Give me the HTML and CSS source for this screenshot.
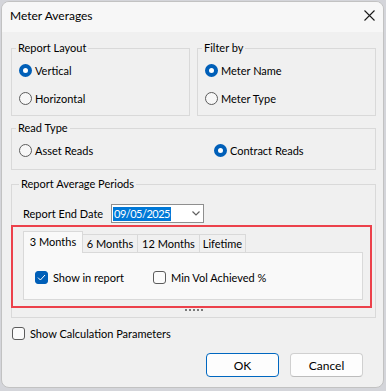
FILE: index.html
```html
<!DOCTYPE html>
<html lang="en">
<head>
  <meta charset="UTF-8" />
  <meta name="viewport" content="width=device-width, initial-scale=1" />
  <title>Meter Averages</title>
  <link rel="stylesheet" href="styles.css">
</head>
<body>
  <div class="window">
    <div class="titlebar">
      <span class="title">Meter Averages</span>
      <svg class="close" width="11" height="11" viewBox="0 0 11 11">
        <path d="M0.5 0.5 L10.5 10.5 M10.5 0.5 L0.5 10.5" stroke="#1a1a1a" stroke-width="1.1" fill="none" />
      </svg>
    </div>

    <div class="content">
      <div class="top-row">
        <fieldset class="group">
          <legend>Report Layout</legend>
          <div class="options">
            <div class="radio"><span class="radio-mark on"></span>Vertical</div>
            <div class="radio"><span class="radio-mark"></span>Horizontal</div>
          </div>
        </fieldset>
        <fieldset class="group">
          <legend>Filter by</legend>
          <div class="options">
            <div class="radio"><span class="radio-mark on"></span>Meter Name</div>
            <div class="radio"><span class="radio-mark"></span>Meter Type</div>
          </div>
        </fieldset>
      </div>

      <fieldset class="group read-type">
        <legend>Read Type</legend>
        <div class="options">
          <div class="radio"><span class="radio-mark"></span>Asset Reads</div>
          <div class="radio"><span class="radio-mark on"></span>Contract Reads</div>
        </div>
      </fieldset>

      <fieldset class="group periods">
        <legend>Report Average Periods</legend>
        <div class="date-row">
          <span class="date-label">Report End Date</span>
          <div class="datebox">
            <span class="sel">09/05/2025</span>
            <svg width="8" height="5" viewBox="0 0 8 5">
              <path d="M0.5 0.5 L4 4 L7.5 0.5" stroke="#606060" stroke-width="1.2" fill="none" />
            </svg>
          </div>
        </div>

        <div class="tabs">
          <div class="tab-strip">
            <div class="tab active" style="width: 60px">3 Months</div>
            <div class="tab" style="width: 56px">6 Months</div>
            <div class="tab" style="width: 63px">12 Months</div>
            <div class="tab" style="width: 47px">Lifetime</div>
          </div>
          <div class="panel">
            <div class="check">
              <span class="check-mark on">
                <svg width="11" height="11" viewBox="0 0 11 11">
                  <path d="M2 5.6 L4.4 8 L9 3" stroke="#fff" stroke-width="1" fill="none" />
                </svg>
              </span>
              Show in report
            </div>
            <div class="check"><span class="check-mark"></span>Min Vol Achieved %</div>
          </div>
        </div>

        <div class="grip"><i></i><i></i><i></i><i></i><i></i></div>
      </fieldset>

      <div class="check calc"><span class="check-mark"></span>Show Calculation Parameters</div>

      <div class="buttons">
        <button class="btn btn-default">OK</button>
        <button class="btn">Cancel</button>
      </div>
    </div>

    <div class="highlight"></div>
  </div>
</body>
</html>
```

FILE: styles.css
```css
body {
  margin: 0;
  background: #d4d5da;
  font-family: Lato, "Liberation Sans", sans-serif;
  font-size: 11px;
  color: #000;
}

.window {
  position: relative;
  box-sizing: border-box;
  width: 383px;
  height: 387px;
  margin: 1px 0 0 1px;
  border: 1px solid #c2c2c2;
  border-radius: 8px;
  background: #f0f0f0;
  overflow: hidden;
}

.titlebar {
  height: 30px;
  background: #f7f7f7;
  display: flex;
  justify-content: space-between;
  align-items: flex-start;
}
.title {
  margin: 6px 0 0 8px;
  font-size: 12px;
  line-height: 16px;
}
.close {
  margin: 8px 8px 0 0;
}

.content {
  padding: 8px 7px 0 9px;
}

.top-row {
  display: grid;
  grid-template-columns: 179px 179px;
  gap: 7px;
}

.group {
  margin: 0;
  padding: 0;
  min-width: 0;
  border: 1px solid #d9d9d9;
}
.group legend {
  padding: 0 2px;
  margin-left: 4px;
  line-height: 16px;
}
.group .options {
  display: flex;
  flex-direction: column;
  gap: 8px;
  padding: 4px 7px 7px;
}

.radio {
  display: flex;
  align-items: center;
  gap: 3px;
  height: 20px;
}
.radio-mark {
  box-sizing: border-box;
  width: 13px;
  height: 13px;
  border-radius: 50%;
  border: 1px solid #5c5c5c;
  background: #f7f7f7;
}
.radio-mark.on {
  border: 4px solid #005fb8;
  background: #fff;
}

.read-type {
  margin-top: 4px;
}
.read-type .options {
  display: grid;
  grid-template-columns: 187px auto;
  padding: 4px 7px 9px;
}

.periods {
  margin-top: 6px;
}
.periods legend {
  margin-left: 7px;
}

.date-row {
  display: flex;
  align-items: center;
  height: 19px;
  margin: 12px 0 0 11px;
}
.date-label {
  width: 88px;
}
.datebox {
  box-sizing: border-box;
  width: 93px;
  height: 19px;
  border: 1px solid #8f8f8f;
  background: #fff;
  display: flex;
  align-items: center;
  justify-content: space-between;
  padding: 0 3px 0 1px;
}
.sel {
  background: #0078d7;
  color: #fff;
  line-height: 14px;
  padding: 0 1px;
  letter-spacing: -0.5px;
}

.tabs {
  margin: 8px 12px 0 11px;
}
.tab-strip {
  display: flex;
  align-items: flex-end;
  height: 21px;
}
.tab {
  box-sizing: border-box;
  height: 18px;
  margin-left: -1px;
  border: 1px solid #d9d9d9;
  border-bottom: none;
  background: #f0f0f0;
  text-align: center;
  line-height: 17px;
}
.tab:first-child {
  margin-left: 0;
}
.tab.active {
  position: relative;
  z-index: 1;
  height: 22px;
  margin-bottom: -1px;
  background: #f9f9f9;
  line-height: 19px;
}
.panel {
  box-sizing: border-box;
  height: 48px;
  border: 1px solid #d9d9d9;
  background: #f9f9f9;
  display: grid;
  grid-template-columns: 118px auto;
  align-items: start;
  padding: 14px 0 0 11px;
}

.check {
  display: flex;
  align-items: center;
  gap: 5px;
  height: 20px;
}
.check-mark {
  box-sizing: border-box;
  width: 13px;
  height: 13px;
  border: 1px solid #5c5c5c;
  border-radius: 3px;
  background: #fbfbfb;
  display: flex;
}
.check-mark.on {
  background: #005fb8;
  border-color: #005fb8;
}

.grip {
  display: flex;
  justify-content: center;
  gap: 2px;
  margin: 9px 0 6px;
}
.grip i {
  width: 2px;
  height: 2px;
  background: #7a7a7a;
}

.calc {
  margin: 5px 0 0 1px;
}

.buttons {
  display: flex;
  justify-content: flex-end;
  gap: 11px;
  margin: 10px 13px 0 0;
}
.btn {
  box-sizing: border-box;
  width: 73px;
  height: 24px;
  font: inherit;
  font-size: 12px;
  color: #000;
  background: #fdfdfd;
  border: 1px solid #d0d0d0;
  border-bottom-color: #bcbcbc;
  border-radius: 4px;
}
.btn-default {
  border-color: #0067c0;
}

.highlight {
  position: absolute;
  left: 9px;
  top: 223px;
  box-sizing: border-box;
  width: 361px;
  height: 83px;
  border: 2px solid #ec414b;
}
```
